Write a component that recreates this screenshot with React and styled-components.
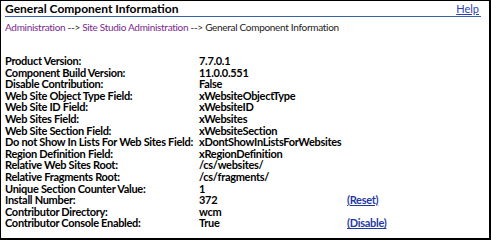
import React from 'react'
import styled, { createGlobalStyle } from 'styled-components'

const GlobalStyle = createGlobalStyle`
  html, body {
    margin: 0;
    padding: 0;
    background: #ffffff;
  }
  body {
    font-family: Lato, "Liberation Sans", sans-serif;
  }
`

const rows = [
  { label: 'Product Version:', value: '7.7.0.1' },
  { label: 'Component Build Version:', value: '11.0.0.551' },
  { label: 'Disable Contribution:', value: 'False' },
  { label: 'Web Site Object Type Field:', value: 'xWebsiteObjectType' },
  { label: 'Web Site ID Field:', value: 'xWebsiteID' },
  { label: 'Web Sites Field:', value: 'xWebsites' },
  { label: 'Web Site Section Field:', value: 'xWebsiteSection' },
  { label: 'Do not Show In Lists For Web Sites Field:', value: 'xDontShowInListsForWebsites' },
  { label: 'Region Definition Field:', value: 'xRegionDefinition' },
  { label: 'Relative Web Sites Root:', value: '/cs/websites/' },
  { label: 'Relative Fragments Root:', value: '/cs/fragments/' },
  { label: 'Unique Section Counter Value:', value: '1' },
  { label: 'Install Number:', value: '372', action: '(Reset)' },
  { label: 'Contributor Directory:', value: 'wcm' },
  { label: 'Contributor Console Enabled:', value: 'True', action: '(Disable)' },
]

const App = () => {
  return (
    <Frame>
      <GlobalStyle />
      <Header>
        <Title>General Component Information</Title>
        <HelpLink href="#">Help</HelpLink>
      </Header>

      <Crumbs>
        <CrumbLink href="#">Administration</CrumbLink> --&gt;{' '}
        <CrumbLink href="#">Site Studio Administration</CrumbLink> --&gt;{' '}
        General Component Information
      </Crumbs>

      <InfoTable>
        {rows.map(row => (
          <Row key={row.label}>
            <Label>{row.label}</Label>
            <Value>{row.value}</Value>
            <Action>{row.action && <ActionLink href="#">{row.action}</ActionLink>}</Action>
          </Row>
        ))}
      </InfoTable>
    </Frame>
  )
}

export default App

// Styled Components
const Frame = styled.div`
  box-sizing: border-box;
  width: 491px;
  height: 240px;
  border-style: solid;
  border-color: #000;
  border-width: 1px 2px 2px 1px;
  padding: 0 8px 0 4px;
  overflow: hidden;
  font-size: 11px;
  color: #000;
`

const Header = styled.div`
  display: flex;
  justify-content: space-between;
  align-items: flex-end;
  height: 15px;
  border-bottom: 1px solid #3a62a6;
`

const Title = styled.div`
  font-size: 12px;
  font-weight: bold;
  line-height: 15px;
`

const HelpLink = styled.a`
  font-size: 11px;
  line-height: 15px;
  color: #2b3fb8;
  text-decoration: underline;
  padding-right: 2px;
`

const Crumbs = styled.div`
  margin-top: 3px;
  font-size: 10px;
  letter-spacing: -0.3px;
  line-height: 14px;
  color: #222;
  white-space: nowrap;
`

const CrumbLink = styled.a`
  color: #7a2a8c;
  text-decoration: none;
`

const InfoTable = styled.div`
  display: grid;
  grid-template-columns: 194px 148px 1fr;
  margin-top: 21px;
  font-weight: bold;
  letter-spacing: -0.3px;
`

const Row = styled.div`
  display: contents;
`

const Label = styled.div`
  line-height: 11.6px;
  white-space: nowrap;
`

const Value = styled.div`
  line-height: 11.6px;
  white-space: nowrap;
`

const Action = styled.div`
  line-height: 11.6px;
`

const ActionLink = styled.a`
  color: #1f3aa6;
  text-decoration: underline;
`
